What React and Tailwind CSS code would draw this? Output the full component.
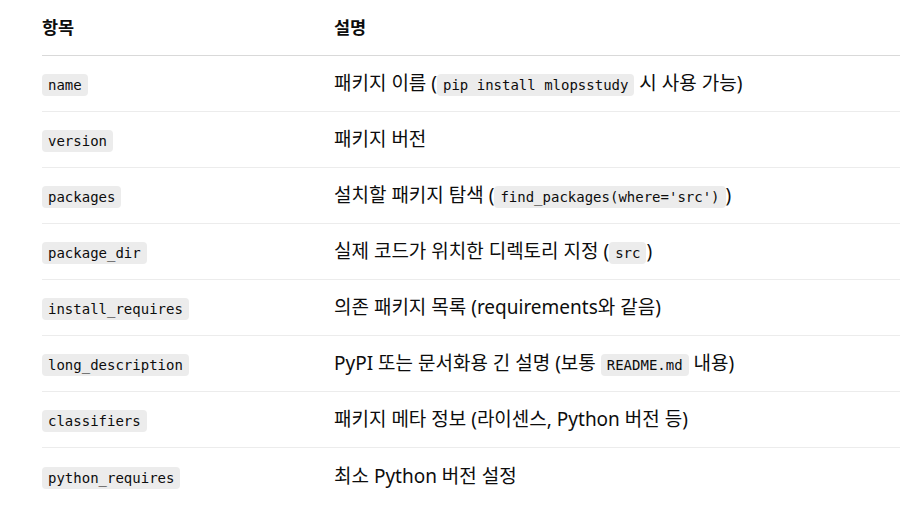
const rows = [
  { key: 'name', desc: ['패키지 이름 (', { code: 'pip install mlopsstudy' }, ' 시 사용 가능)'] },
  { key: 'version', desc: ['패키지 버전'] },
  { key: 'packages', desc: ['설치할 패키지 탐색 (', { code: "find_packages(where='src')" }, ')'] },
  { key: 'package_dir', desc: ['실제 코드가 위치한 디렉토리 지정 (', { code: 'src' }, ')'] },
  { key: 'install_requires', desc: ['의존 패키지 목록 (requirements와 같음)'] },
  { key: 'long_description', desc: ['PyPI 또는 문서화용 긴 설명 (보통 ', { code: 'README.md' }, ' 내용)'] },
  { key: 'classifiers', desc: ['패키지 메타 정보 (라이센스, Python 버전 등)'] },
  { key: 'python_requires', desc: ['최소 Python 버전 설정'] },
];

function Code({ children }) {
  return (
    <code className="rounded-[4px] bg-[#ececec] px-[6px] py-[3px] font-['DejaVu_Sans_Mono',monospace] text-[14px] font-normal text-[#0d0d0d]">
      {children}
    </code>
  );
}

export default function App() {
  return (
    <div className="min-h-screen bg-white pl-[42px] font-['Noto_Sans','Noto_Sans_CJK_KR',sans-serif] text-[#0d0d0d]">
      {/* header */}
      <div className="grid h-[56px] grid-cols-[292px_1fr] items-center border-b border-[#d9d9d9] text-[17.5px] font-bold">
        <div>항목</div>
        <div>설명</div>
      </div>

      {rows.map((r, i) => (
        <div
          key={r.key}
          className={
            'grid h-[56px] grid-cols-[292px_1fr] items-center text-[19px] ' +
            (i < rows.length - 1 ? 'border-b border-[#ececec]' : '')
          }
        >
          <div>
            <Code>{r.key}</Code>
          </div>
          <div>
            {r.desc.map((d, j) => (typeof d === 'string' ? <span key={j}>{d}</span> : <Code key={j}>{d.code}</Code>))}
          </div>
        </div>
      ))}
    </div>
  );
}
